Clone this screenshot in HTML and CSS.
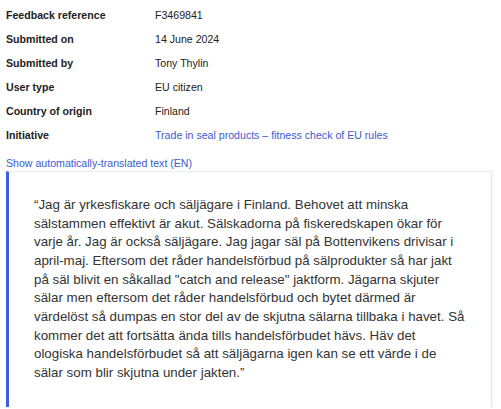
FILE: index.html
```html
<!DOCTYPE html>
<html>
<head>
<meta charset="utf-8">
<link rel="stylesheet" href="styles.css">
</head>
<body>
<dl class="meta">
  <div class="row"><dt>Feedback reference</dt><dd>F3469841</dd></div>
  <div class="row"><dt>Submitted on</dt><dd>14 June 2024</dd></div>
  <div class="row"><dt>Submitted by</dt><dd>Tony Thylin</dd></div>
  <div class="row"><dt>User type</dt><dd>EU citizen</dd></div>
  <div class="row"><dt>Country of origin</dt><dd>Finland</dd></div>
  <div class="row"><dt>Initiative</dt><dd><a class="link" href="#">Trade in seal products – fitness check of EU rules</a></dd></div>
</dl>
<a class="link translate" href="#">Show automatically-translated text (EN)</a>
<blockquote class="quote">
  <p>“Jag är yrkesfiskare och säljägare i Finland. Behovet att minska sälstammen effektivt är akut. Sälskadorna på fiskeredskapen ökar för varje år. Jag är också säljägare. Jag jagar säl på Bottenvikens drivisar i april-maj. Eftersom det råder handelsförbud på sälprodukter så har jakt på säl blivit en såkallad "catch and release" jaktform. Jägarna skjuter sälar men eftersom det råder handelsförbud och bytet därmed är värdelöst så dumpas en stor del av de skjutna sälarna tillbaka i havet. Så kommer det att fortsätta ända tills handelsförbudet hävs. Häv det ologiska handelsförbudet så att säljägarna igen kan se ett värde i de sälar som blir skjutna under jakten.”</p>
</blockquote>
</body>
</html>
```
FILE: styles.css
```css
html, body {
  margin: 0;
  padding: 0;
  background: #fff;
}
body {
  font-family: "Liberation Sans", Arial, sans-serif;
  color: #222;
  padding: 0 9px 0 6px;
  overflow: hidden;
}
.meta {
  margin: 0;
  padding-top: 8px;
}
.row {
  display: grid;
  grid-template-columns: 149px 1fr;
  height: 24px;
  font-size: 10.6px;
  line-height: 14px;
}
dt {
  font-weight: bold;
  color: #222;
}
dd {
  margin: 0;
  color: #222;
}
.link {
  color: #3b5bd1;
  text-decoration: none;
}
.translate {
  display: block;
  font-size: 10.6px;
  line-height: 14px;
  margin-top: 4px;
}
.quote {
  margin: 1px 0 0 0;
  border-left: 3px solid #3f5fd8;
  border-top: 1px solid #eceff5;
  border-right: 1px solid #e6e9f0;
  box-shadow: 1px 0 2px rgba(0,0,0,0.06);
  padding: 24px 24px 24px 25px;
}
.quote p {
  margin: 0;
  font-size: 13.33px;
  line-height: 18.67px;
  color: #333;
}
```
